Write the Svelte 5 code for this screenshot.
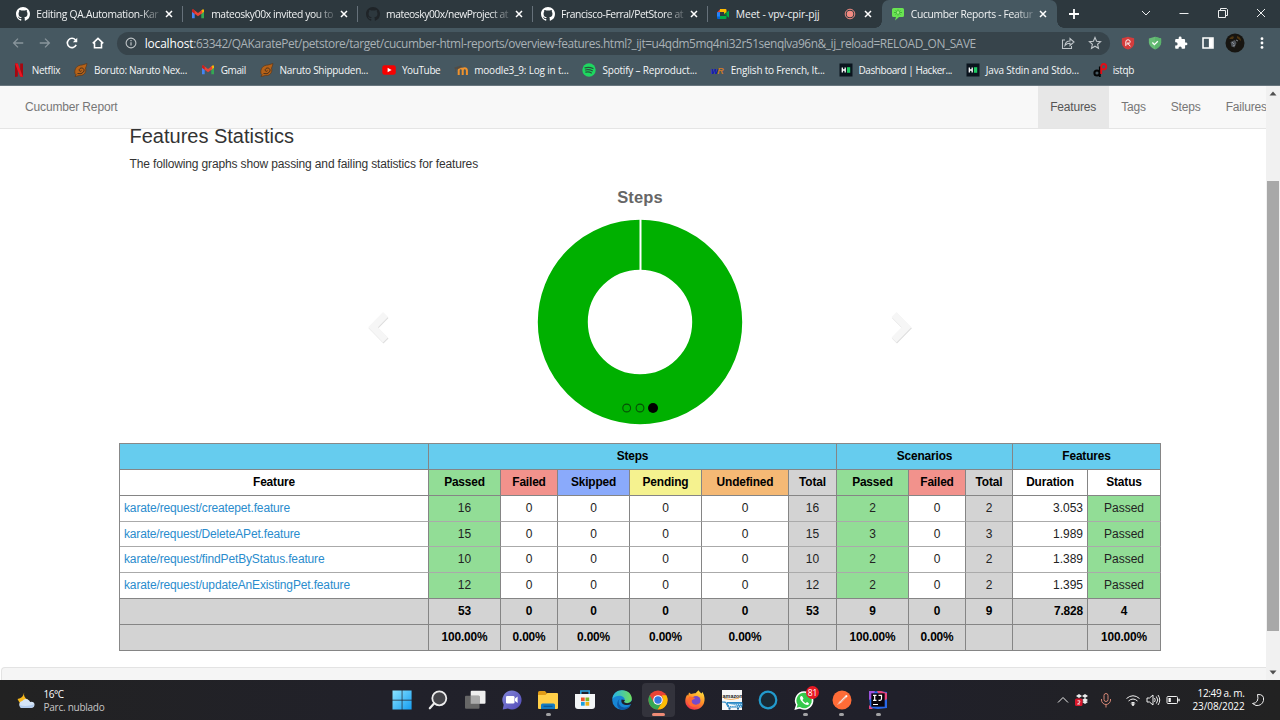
<script>
  // Spreads the letters of a label so that it fills the given width.
  function fit(node, width) {
    const count = [...node.textContent].length;
    const natural = node.getBoundingClientRect().width;
    node.style.letterSpacing = (width - natural) / count + 'px';
  }

  const tabs = [
    { icon: 'github', title: 'Editing QA.Automation-Kar', w: 122 },
    { icon: 'gmail', title: 'mateosky00x invited you to', w: 122 },
    { icon: 'githubDark', title: 'mateosky00x/newProject at', w: 122 },
    { icon: 'github', title: 'Francisco-Ferral/PetStore at', w: 122 },
    { icon: 'meet', title: 'Meet - vpv-cpir-pjj', w: 83.5, rec: true },
    { icon: 'cucumber', title: 'Cucumber Reports - Featur', w: 122, active: true }
  ];

  const bookmarks = [
    ['netflix', 'Netflix', 28.5],
    ['naruto', 'Boruto: Naruto Nex...', 93],
    ['gmail', 'Gmail', 25],
    ['naruto', 'Naruto Shippuden...', 88.5],
    ['youtube', 'YouTube', 38.5],
    ['moodle', 'moodle3_9: Log in t...', 94.5],
    ['spotify', 'Spotify – Reproduct...', 94.5],
    ['reverso', 'English to French, It...', 94],
    ['hacker', 'Dashboard | Hacker...', 93.5],
    ['hacker', 'Java Stdin and Stdo...', 93],
    ['istqb', 'istqb', 21.5]
  ];

  const heads = ['Feature', 'Passed', 'Failed', 'Skipped', 'Pending', 'Undefined', 'Total', 'Passed', 'Failed', 'Total', 'Duration', 'Status'];
  const headClass = ['', 'passed', 'failed', 'skipped', 'pending', 'undef', 'total', 'passed', 'failed', 'total', '', ''];
  const bodyClass = ['link', 'passed', '', '', '', '', 'total', 'passed', '', 'total', 'right', 'passed'];

  const rows = [
    ['karate/request/createpet.feature', '16', '0', '0', '0', '0', '16', '2', '0', '2', '3.053', 'Passed'],
    ['karate/request/DeleteAPet.feature', '15', '0', '0', '0', '0', '15', '3', '0', '3', '1.989', 'Passed'],
    ['karate/request/findPetByStatus.feature', '10', '0', '0', '0', '0', '10', '2', '0', '2', '1.389', 'Passed'],
    ['karate/request/updateAnExistingPet.feature', '12', '0', '0', '0', '0', '12', '2', '0', '2', '1.395', 'Passed']
  ];
  const linkWidths = [166, 176, 200.5, 226];

  const totals = [
    ['', '53', '0', '0', '0', '0', '53', '9', '0', '9', '7.828', '4'],
    ['', '100.00%', '0.00%', '0.00%', '0.00%', '0.00%', '', '100.00%', '0.00%', '', '', '100.00%']
  ];

  const apps = [
    { name: 'windows' }, { name: 'search' }, { name: 'taskview' }, { name: 'chat' },
    { name: 'folder', open: true }, { name: 'store' }, { name: 'edge' },
    { name: 'chrome', current: true }, { name: 'firefox' }, { name: 'amazon' },
    { name: 'alexa' }, { name: 'whatsapp', open: true, badge: '81' },
    { name: 'postman', open: true }, { name: 'intellij', open: true }
  ];
</script>

{#snippet octocat(color)}
  <svg viewBox="0 0 16 16" fill={color}><path d="M8 0C3.58 0 0 3.58 0 8c0 3.54 2.29 6.53 5.47 7.59.4.07.55-.17.55-.38 0-.19-.01-.82-.01-1.49-2.01.37-2.53-.49-2.69-.94-.09-.23-.48-.94-.82-1.13-.28-.15-.68-.52-.01-.53.63-.01 1.08.58 1.23.82.72 1.21 1.87.87 2.33.66.07-.52.28-.87.51-1.07-1.78-.2-3.64-.89-3.64-3.95 0-.87.31-1.59.82-2.15-.08-.2-.36-1.02.08-2.12 0 0 .67-.21 2.2.82.64-.18 1.32-.27 2-.27s1.36.09 2 .27c1.53-1.04 2.2-.82 2.2-.82.44 1.1.16 1.92.08 2.12.51.56.82 1.27.82 2.15 0 3.07-1.87 3.75-3.65 3.95.29.25.54.73.54 1.48 0 1.07-.01 1.93-.01 2.2 0 .21.15.46.55.38A8.01 8.01 0 0 0 16 8c0-4.42-3.58-8-8-8z" /></svg>
{/snippet}

{#snippet icon(name)}
  {#if name === 'github'}
    {@render octocat('#ffffff')}
  {:else if name === 'githubDark'}
    {@render octocat('#1f2428')}
  {:else if name === 'gmail'}
    <svg viewBox="0 0 14 14">
      <path d="M1 4v7.2h2.7V6z" fill="#4285f4" /><path d="M13 4v7.2h-2.7V6z" fill="#34a853" />
      <path d="M10.3 3.2 12 2.3q1 0 1 1.2v1.2l-2.7 2.2z" fill="#fbbc04" />
      <path d="M1 4.7V3.5Q1 2 2.4 2.5L7 6l4-3 .5 3L7 9.2z" fill="#ea4335" />
      <path d="M1 4.7V3.5Q1 2.3 2 2.3l1.7.9v3.6z" fill="#c5221f" />
    </svg>
  {:else if name === 'meet'}
    <svg viewBox="0 0 14 14">
      <path d="M1 5.5 4.3 2v3.5z" fill="#ea4335" /><path d="M1 5.2h3v5H1z" fill="#2684fc" />
      <path d="M1 9.5h3V12H2q-1 0-1-1z" fill="#0066da" /><path d="M4 9h6.5v2q0 1-1 1H4z" fill="#00ac47" />
      <path d="M4 2h5.5q1 0 1 1v3.5L8 7.2V5H4z" fill="#ffba00" />
      <path d="M4 5h4v4H4z" fill="#2d383e" />
      <path d="M10.500 5.500 13 3.400v7.400l-2.500-2z" fill="#00ac47" /><path d="m8 7 2.500-2v4z" fill="#00832d" />
    </svg>
  {:else if name === 'cucumber'}
    <svg viewBox="0 0 14 14">
      <path d="M2.500 1h9Q13 1 13 2.500v6Q13 10 11.500 10H8l-4 3.500L5 10H2.500Q1 10 1 8.500v-6Q1 1 2.500 1z" fill="#69e452" />
      <path d="m4.500 3.500 5 4m0-4-5 4M3 5.500h8M7 2.500v6" stroke="#35a52f" stroke-width=".8" />
      <circle cx="7" cy="5.500" r="1.300" fill="#9bf080" />
    </svg>
  {:else if name === 'netflix'}
    <svg viewBox="0 0 14 14"><path d="M3 .5h2.800v13L3 14zM8.200.5H11V14l-2.800-.5z" fill="#a80710" /><path d="M3 .5h2.800L11 14l-2.800-.5z" fill="#ec1420" /></svg>
  {:else if name === 'naruto'}
    <svg viewBox="0 0 14 14">
      <path d="M1 10.500C0 6 3 2 8 2l5-1.500C12.500 3 12 4 11.500 5 13 10 9 13 5.500 12.500L1 13.500l1-2z" fill="#b66218" stroke="#5a3718" stroke-width=".7" />
      <path d="M3.500 10.500q4 1.200 6-1.500c2-3-1.500-5-3.500-3.500s0 4 1.500 2.200" fill="none" stroke="#47301d" stroke-width="1" />
    </svg>
  {:else if name === 'youtube'}
    <svg viewBox="0 0 14 14"><rect x=".3" y="2.300" width="13.500" height="9.500" rx="2.200" fill="#f70000" /><path d="m5.600 4.800 4 2.200-4 2.300z" fill="#fff" /></svg>
  {:else if name === 'moodle'}
    <svg viewBox="0 0 14 14"><path d="M4.700 12V7.300q0-2 2-2t2 2V12M8.700 7.500q0-2.200 2-2.200t2.200 2V12" fill="none" stroke="#f0922c" stroke-width="2" /><path d="M.5 5 7 2.800 8 4 3.500 6zM1.500 5v4" fill="#524b43" stroke="#524b43" stroke-width=".6" /></svg>
  {:else if name === 'spotify'}
    <svg viewBox="0 0 14 14"><circle cx="7" cy="7" r="6.700" fill="#1ed760" /><path d="M3 4.800q4.300-1.200 8 .7M3.400 7q3.700-1 6.900.8M3.800 9.200q3-.8 5.600.7" fill="none" stroke="#27533b" stroke-width="1.200" stroke-linecap="round" /></svg>
  {:else if name === 'reverso'}
    <svg viewBox="0 0 14 14"><text x="0" y="11" class="rev blue">w</text><text x="6.300" y="11" class="rev orange">R</text></svg>
  {:else if name === 'hacker'}
    <svg viewBox="0 0 14 14"><rect x=".5" y=".5" width="13" height="13" fill="#0b141e" /><path d="M3.300 4.500v5M6.200 4.500v5M3.300 7h3" stroke="#fff" stroke-width="1.300" /><path d="M8 4.200h3.200v5.600H8z" fill="#1ecb62" /></svg>
  {:else if name === 'istqb'}
    <svg viewBox="0 0 14 14" fill="none"><circle cx="4" cy="10" r="2.600" stroke="#050505" stroke-width="2" /><path d="M6.800 3.500V14" stroke="#050505" stroke-width="1.800" /><path d="M8.200 11V4q0-3 2.500-3t2.500 2.700-2.700 2.600H9" stroke="#e30d16" stroke-width="1.900" /></svg>
  {/if}
{/snippet}

{#snippet appIcon(name)}
  {#if name === 'windows'}
    <svg viewBox="0 0 20 20"><defs><linearGradient id="win" x2="1" y2="1"><stop stop-color="#8be4ff" /><stop offset="1" stop-color="#149cf0" /></linearGradient></defs><path d="M.5.5h9.200v9.200H.5zM10.400.5h9.200v9.200h-9.200zM.5 10.400h9.200v9.200H.5zM10.400 10.400h9.200v9.200h-9.200z" fill="url(#win)" /></svg>
  {:else if name === 'search'}
    <svg viewBox="0 0 20 20"><circle cx="11.300" cy="8.300" r="7" fill="#45454a" stroke="#ececec" stroke-width="1.800" /><path d="m6 13.600-4.200 4.700" stroke="#ececec" stroke-width="2.200" stroke-linecap="round" /></svg>
  {:else if name === 'taskview'}
    <svg viewBox="0 0 20 20"><rect x="5.700" y=".8" width="14.800" height="13" rx="1" fill="#efefef" /><rect x="0" y="5.800" width="14.500" height="13" rx="1" fill="#666" /><path d="M5.700 5.800h8.800v8H5.700z" fill="#aaa" /></svg>
  {:else if name === 'chat'}
    <svg viewBox="0 0 20 20"><defs><linearGradient id="chat" x2="1" y2="1"><stop stop-color="#8286d8" /><stop offset="1" stop-color="#5149b8" /></linearGradient></defs><path d="M10 .5a9.500 9.500 0 1 1-4 18.100L.7 19.500l1-4.700A9.500 9.500 0 0 1 10 .5z" fill="url(#chat)" /><rect x="4" y="6" width="8.500" height="7.500" rx="1.300" fill="#fff" /><path d="m13 8.500 2.600-2v6.500L13 11z" fill="#fff" /></svg>
  {:else if name === 'folder'}
    <svg viewBox="0 0 20 20"><path d="M0 2.500q0-1.500 1.500-1.500H7l2 2.500V6H0z" fill="#e09b16" /><path d="M0 5h7.500l1.800-2H19q1 0 1 1v14q0 1-1 1H1q-1 0-1-1z" fill="#ffcf48" /><path d="M3 19v-4q0-1.500 1.500-1.500h11q1.500 0 1.500 1.500v4z" fill="#127bc2" /><path d="M5.500 16.300h9" stroke="#075491" stroke-width="1.200" /></svg>
  {:else if name === 'store'}
    <svg viewBox="0 0 20 20"><path d="M5.800 5V1h8.400v4" fill="none" stroke="#2ba4df" stroke-width="1.500" /><path d="M0 4h20v12q0 3-3 3H3q-3 0-3-3z" fill="#f3f5f6" /><path d="M6 7.500h3.700v3.700H6z" fill="#ec5428" /><path d="M10.500 7.500h3.700v3.700h-3.700z" fill="#7db729" /><path d="M6 12h3.700v3.700H6z" fill="#1ba1dd" /><path d="M10.500 12h3.700v3.700h-3.700z" fill="#efb116" /></svg>
  {:else if name === 'edge'}
    <svg viewBox="0 0 20 20"><defs><linearGradient id="edge"><stop stop-color="#25b4e9" /><stop offset="1" stop-color="#71df5b" /></linearGradient></defs><circle cx="10" cy="10" r="9.800" fill="#1786d4" /><path d="M.3 9C1 3.500 5 .2 10 .2c6 0 10 4 9.800 8.800-.2 4-5.500 5-7.300 3.500-1.300-1 .2-1.500.2-3C12.500 5.500 5 3.500.3 9z" fill="url(#edge)" /><path d="M8 8.500c-3 3.500-.5 8.500 4 9 3 .3 5-1 6.800-2.500C17.500 18 14 20 10 19.800 4.500 19 3.500 12 8 8.500z" fill="#0d5aa9" /><path d="M9.500 9.500q-1 4 3 5.200 4 .9 6.700-.9l.8 1.500 2-3-2-1.500q-2 2.800-6 2.300-2-.4-2-1.300l1-1.800z" fill="#20202a" /></svg>
  {:else if name === 'chrome'}
    <svg viewBox="0 0 20 20"><circle cx="10" cy="10" r="9.600" fill="#ea4335" /><path d="M1.700 5.200A9.600 9.600 0 0 0 9.700 19.600L14.200 12.400 10 14.800 5.800 12.300z" fill="#34a853" /><path d="M18.300 5.300A9.600 9.600 0 0 1 9.700 19.600l4.600-7.300q1.500-3-.4-7z" fill="#fbbc04" /><circle cx="10" cy="10" r="4.800" fill="#fff" /><circle cx="10" cy="10" r="3.700" fill="#3478df" /></svg>
  {:else if name === 'firefox'}
    <svg viewBox="0 0 20 20"><defs><linearGradient id="fox" x1=".8" x2=".3" y2="1"><stop stop-color="#ffe33e" /><stop offset=".5" stop-color="#ff8f27" /><stop offset="1" stop-color="#ef304d" /></linearGradient></defs><path d="M4 2.500 6 4q3-1 4.500-.7L13.500.3q1 2 3 3.200l1-1.500C20 6 20 10 19 13c-2.500 7.500-14 9.500-18 1.500-1.500-4-.3-8 1.500-10L3 6z" fill="url(#fox)" /><circle cx="11" cy="10.500" r="4.500" fill="#744bca" /><path d="M4 6.500c3 0 4 1 6 1.500-1 2-4 1.500-3.500 4 1 3.500 6 3.500 7.500 1-1 5-9 5-11 0z" fill="#ff6a31" /></svg>
  {:else if name === 'amazon'}
    <svg viewBox="0 0 20 20"><path d="M0 0h20v20H0z" fill="#f7f7f7" /><text x=".6" y="7.800" class="amz">amazon</text><path d="M2 8.500q7 2.200 15-.4" stroke="#ed9b36" stroke-width=".8" fill="none" /><path d="M0 12h3.500l2.500 5h14M5 12.500h15v4H7z" fill="#4a9bd0" stroke="#2b88c5" stroke-width="1" /><path d="M6 14.500h14M7 16.500h13" stroke="#d8effc" stroke-width=".8" stroke-dasharray="1.200 1" /><circle cx="7.500" cy="18.700" r="1.100" fill="#256b9f" /><circle cx="16" cy="18.700" r="1.100" fill="#256b9f" /></svg>
  {:else if name === 'alexa'}
    <svg viewBox="0 0 20 20"><circle cx="10" cy="10" r="8.300" fill="#182a36" stroke="#229bcd" stroke-width="2.200" /></svg>
  {:else if name === 'whatsapp'}
    <svg viewBox="0 0 20 20"><path d="M9 2a8.500 8.500 0 1 1-4.400 15.700L.5 18.800l1.300-4.100A8.500 8.500 0 0 1 9 2z" fill="#34c94b" stroke="#fff" stroke-width="1.500" /><path d="M6.200 6c-2 1-1.200 3.500 1 6s5.500 4 6.700 2.300c.6-1-1.200-2-2-2.300l-1.200 1.200c-1.500-.6-2.600-2-3.200-3.200l1-1.200C8.200 8 7.400 5.800 6.200 6z" fill="#fff" /></svg>
  {:else if name === 'postman'}
    <svg viewBox="0 0 20 20"><circle cx="10" cy="10" r="9.500" fill="#ff6c37" /><path d="m5 15 2.500-3.500L14 5q2 0 1.300 1.500L9 12.700z" fill="#fff" /><path d="m7.500 11.500 6-5.500M5.500 14.500l8.500-7" stroke="#d9562a" stroke-width=".5" /></svg>
  {:else if name === 'intellij'}
    <svg viewBox="0 0 20 20"><path d="M1 2.500 10 1l9 1v16l-9 1-8-1z" fill="#2867e8" /><path d="M9 1l4 0 6 2v6l-5 3zM1 15l4 4H1z" fill="#e7447c" /><path d="M1 1h6L4 8 1 10z" fill="#9c52dd" /><path d="M3.300 3.300h13.400v13.400H3.300z" fill="#09050d" /><path d="M5 5.300h3.500M6.700 5.300v5M5 10.300h3.500M10.500 5.300h3v3.500q0 1.500-1.500 1.500h-1.500M5 14.500h5" fill="none" stroke="#fff" stroke-width="1.200" /></svg>
  {/if}
{/snippet}

<div class="screen">
  <div class="tabstrip">
    {#each tabs as tab, i}
      <div class="tab" class:active={tab.active} class:sep={i < 4}>
        <span class="fav">{@render icon(tab.icon)}</span>
        <span class="title" class:faded={!tab.rec}><span class="txt" use:fit={tab.w}>{tab.title}</span></span>
        {#if tab.rec}
          <svg class="rec" viewBox="0 0 12 12"><circle cx="6" cy="6" r="4.800" fill="none" stroke="#f28b82" /><circle cx="6" cy="6" r="3.300" fill="#f28b82" /></svg>
        {/if}
        <svg class="x" viewBox="0 0 8 8"><path d="m1 1 6 6m0-6L1 7" stroke="#fff" stroke-width="1.500" /></svg>
      </div>
    {/each}
    <svg class="plus" viewBox="0 0 12 12"><path d="M6 1v10M1 6h10" stroke="#fff" stroke-width="1.800" /></svg>
    <div class="winbtns">
      <svg viewBox="0 0 12 12"><path d="m2 4 4 4 4-4" /></svg>
      <svg viewBox="0 0 12 12"><path d="M1.500 6.500h9" /></svg>
      <svg viewBox="0 0 12 12"><path d="M1.500 3.500h7v7h-7zM3.500 3.500v-2h6l1 1v6h-2" /></svg>
      <svg viewBox="0 0 12 12"><path d="m2 2 8 8m0-8-8 8" /></svg>
    </div>
  </div>

  <div class="toolbar">
    <div class="slot"><svg viewBox="0 0 16 16" class="dim"><path d="M14 8H3m5-5L3 8l5 5" /></svg></div>
    <div class="slot"><svg viewBox="0 0 16 16" class="dim"><path d="M2 8h11M8 3l5 5-5 5" /></svg></div>
    <div class="slot"><svg viewBox="0 0 16 16" class="lit"><path d="M12.800 10.200A5.300 5.300 0 1 1 12 4.500l1 1.500" /><path d="M14 2v5H9z" fill="#fff" stroke="none" /></svg></div>
    <div class="slot"><svg viewBox="0 0 16 16" class="lit"><path d="M2 8.500 8 2.800l6 5.700M4 7.500v6h8v-6" /></svg></div>
    <div class="omnibox">
      <svg class="info" viewBox="0 0 12 12"><circle cx="6" cy="6" r="4.900" fill="none" stroke="#bfc4c7" stroke-width="1.100" /><path d="M6 5.200v3.300M6 3v1.200" stroke="#bfc4c7" stroke-width="1.200" /></svg>
      <span class="txt host" use:fit={48.5}>localhost</span><span class="txt path" use:fit={782.500}>:63342/QAKaratePet/petstore/target/cucumber-html-reports/overview-features.html?_ijt=u4qdm5mq4ni32r51senqlva96n&_ij_reload=RELOAD_ON_SAVE</span>
      <svg class="share" viewBox="0 0 14 14"><path d="M4 4H1.500v8.500h9V10M4 9.500q.5-4.500 5-4.500V2.500L13 6 9 9.500V7.300Q6 7.200 4 9.500z" /></svg>
      <svg class="star" viewBox="0 0 14 14"><path d="m7 1.500 1.600 3.700 4 .4-3 2.700.9 4L7 10.200l-3.500 2.100.9-4-3-2.700 4-.4z" /></svg>
    </div>
    <div class="slot"><svg viewBox="0 0 16 16"><path d="M8 .8 15 2.500V9q-1 4.500-7 6.500Q2 13.500 1 9V2.500z" fill="#d43c3c" /><path d="M5.500 11.500V6.800a2.500 2.500 0 0 1 5 0v.5q-1 2-4.300 2M8.500 9.200l2.200 2.600M8 7v2" fill="none" stroke="#fff" stroke-width="1.100" /></svg></div>
    <div class="slot"><svg viewBox="0 0 16 16"><path d="M8 .8 15 2.800V8q-1 4.800-7 7.500Q2 12.800 1 8V2.800z" fill="#67bc76" /><path d="M8 .8 15 2.800V8q-1 4.800-7 7.500z" fill="#5bb46c" /><path d="m5 7.500 2.300 2.400L11.200 6" fill="none" stroke="#fff" stroke-width="1.500" /></svg></div>
    <div class="slot"><svg viewBox="0 0 24 24"><path fill="#fff" d="M20.500 11H19V7c0-1.100-.9-2-2-2h-4V3.500a2.500 2.500 0 0 0-5 0V5H4c-1.100 0-2 .9-2 2v3.800h1.500a2.700 2.700 0 0 1 0 5.400H2V20c0 1.100.9 2 2 2h3.800v-1.500a2.700 2.700 0 0 1 5.400 0V22H17c1.100 0 2-.9 2-2v-4h1.500a2.500 2.500 0 0 0 0-5z" /></svg></div>
    <div class="slot"><svg viewBox="0 0 16 16"><path d="M2.300 2.300h11.400v11.400H2.300z" fill="none" stroke="#fff" stroke-width="1.800" /><path d="M9 2.500h4.500v11H9z" fill="#fff" /></svg></div>
    <div class="slot"><svg class="avatar" viewBox="0 0 20 20"><circle cx="10" cy="10" r="9.500" fill="#171511" /><path d="M4 6q3-4 5-2l-1 2zM12 3q4 1 4 5l-4-3z" fill="#4f3612" /><path d="m5.500 9 4.500-2 1.500 3-2 4.500-3-1z" fill="#50555b" /><path d="m7 9 2 2m-1 2 2-1m1-5 2 1" stroke="#9aa0a6" stroke-width=".8" /></svg></div>
    <div class="slot"><svg viewBox="0 0 16 16" fill="#fff"><circle cx="8" cy="3" r="1.600" /><circle cx="8" cy="8" r="1.600" /><circle cx="8" cy="13" r="1.600" /></svg></div>
  </div>

  <div class="bookmarks">
    {#each bookmarks as [name, label, w]}
      <div class="bm"><span class="fav">{@render icon(name)}</span><span class="txt" use:fit={w}>{label}</span></div>
    {/each}
  </div>

  <div class="viewport">
    <div class="page">
      <nav>
        <span class="txt brand" use:fit={92.5}>Cucumber Report</span>
        <div class="links">
          <span class="current"><span class="txt" use:fit={46}>Features</span></span>
          <span><span class="txt" use:fit={24.5}>Tags</span></span>
          <span><span class="txt" use:fit={30}>Steps</span></span>
          <span><span class="txt" use:fit={41}>Failures</span></span>
        </div>
      </nav>
      <main>
        <h2><span class="txt" use:fit={164.5}>Features Statistics</span></h2>
        <p><span class="txt" use:fit={348.5}>The following graphs show passing and failing statistics for features</span></p>
        <div class="carousel">
          <svg class="arrow" viewBox="0 0 24 34"><path d="M19 4.500 6.500 17.200 19 30" class="shade" /><path d="M18.500 3.500 6 16.200l12.500 12.800" class="face" /></svg>
          <div class="chart">
            <h3><span class="txt" use:fit={45.5}>Steps</span></h3>
            <svg class="donut" viewBox="0 0 206 206">
              <circle cx="103" cy="103" r="77.200" fill="none" stroke="#00b000" stroke-width="50" />
              <path d="M103.500 0v51" stroke="#fff" stroke-width="2" />
              <g fill="none" stroke="#064f06" stroke-width="1.100"><circle cx="89.700" cy="189" r="3.900" /><circle cx="103" cy="189" r="3.900" /></g>
              <circle cx="116" cy="189" r="5" fill="#000" />
            </svg>
          </div>
          <svg class="arrow" viewBox="0 0 24 34"><path d="M5.500 4.500 18 17.200 5.500 30" class="shade" /><path d="M5 3.500 17.500 16.200 5 29" class="face" /></svg>
        </div>
        <div class="table">
          <div class="cell group"></div>
          <div class="cell group span6">Steps</div>
          <div class="cell group span3">Scenarios</div>
          <div class="cell group span2">Features</div>
          {#each heads as h, i}
            <div class="cell head {headClass[i]}">{h}</div>
          {/each}
          {#each rows as row, r}
            {#each row as c, i}
              <div class="cell {bodyClass[i]}" class:soft={r < 3}>
                {#if i === 0}<span class="txt" use:fit={linkWidths[r]}>{c}</span>{:else}{c}{/if}
              </div>
            {/each}
          {/each}
          {#each totals as row}
            {#each row as c, i}
              <div class="cell head total" class:right={i === 10}>{c}</div>
            {/each}
          {/each}
        </div>
      </main>
      <footer></footer>
    </div>
    <div class="scrollbar">
      <svg viewBox="0 0 14 14"><path d="m3.500 9.500 3.500-4 3.500 4z" fill="#505050" /></svg>
      <div class="thumb"></div>
      <svg viewBox="0 0 14 14"><path d="m3.500 4.500 3.500 4 3.500-4z" fill="#505050" /></svg>
    </div>
  </div>

  <div class="taskbar">
    <div class="weather">
      <svg viewBox="0 0 20 18"><path d="M7.500.5Q6.500 6 11.500 8l-2 4-7-1L.5 7.500Q6.500 6.500 7.500.5z" fill="#f7b81c" /><path d="M5.500 17a3.800 3.800 0 0 1 0-7.500q3-3.500 7-.8 1 .8 1.300 1.800 4.700-.5 4.700 3-.3 3.500-4.200 3.500z" fill="#d5e4f7" /><path d="M3 14q7 2 15-1-.5 4-4 4H6q-3 0-3-3z" fill="#b3ccee" /></svg>
      <div><span class="txt" use:fit={20}>16°C</span><span class="txt grey" use:fit={61}>Parc. nublado</span></div>
    </div>
    <div class="apps">
      {#each apps as app}
        <div class="app" class:current={app.current} class:open={app.open}>
          {@render appIcon(app.name)}
          {#if app.badge}<span class="badge">{app.badge}</span>{/if}
        </div>
      {/each}
    </div>
    <div class="tray">
      <svg class="chev" viewBox="0 0 12 12"><path d="m1 8.500 5-5 5 5" /></svg>
      <svg class="drop" viewBox="0 0 14 14"><path d="m4 1 3 2-3 2-3-2zM10 1l3 2-3 2-3-2zM10 5l3 2-3 2-3-2zM7 9l3-1.500L13 9l-3 2z" fill="#eee" stroke="none" /><rect x="0" y="5.500" width="7.500" height="7.500" rx="1.500" fill="#d9152a" stroke="none" /><path d="M2.500 7.800h2.300v1.500L2.500 11h2.500" stroke-width=".9" /></svg>
      <svg class="mic" viewBox="0 0 14 16"><rect x="5" y="1.500" width="4" height="8" rx="2" /><path d="M2.500 7v1a4.500 4.500 0 0 0 9 0V7M7 12.500v3" /></svg>
      <svg class="wifi" viewBox="0 0 14 14"><path d="M.5 5.500q6.500-5.500 13 0M2.500 8q4.500-4 9 0M4.800 10.300q2.200-2 4.400 0" /><circle cx="7" cy="11.500" r="1" fill="#eee" /></svg>
      <svg class="vol" viewBox="0 0 14 14"><path d="M1 5h2.500L7 2v10L3.500 9H1zM8.500 5q1.500 2 0 4M10.300 3.500q3 3.500 0 7M12 2q3.500 5 0 10" /></svg>
      <svg class="bat" viewBox="0 0 14 10"><rect x="1" y="1.500" width="10.500" height="7" rx="1" /><path d="M2.500 3h2.300v4H2.500z" fill="#fff" stroke="none" /><path d="M13 3.800v2.400" stroke-width="1.400" /></svg>
      <div class="clock"><span class="txt" use:fit={47}>12:49 a. m.</span><span class="txt" use:fit={52}>23/08/2022</span></div>
      <svg class="moon" viewBox="0 0 14 14"><path d="M6.500 1.500q7-.5 6 6-1.500 5.500-7.500 5L1.500 10.500q7-.5 5-9z" /></svg>
    </div>
  </div>
</div>

<style>
  :global(body) { margin: 0; overflow: hidden; }
  .screen { width: 1280px; height: 720px; display: flex; flex-direction: column; overflow: hidden; background: #fff; font-family: "Open Sans", "Noto Sans", sans-serif; }
  .txt { display: inline-block; flex: none; white-space: nowrap; }
  svg { display: block; flex: none; overflow: visible; }

  .tabstrip { height: 28px; flex: none; background: #2d383e; display: flex; align-items: center; padding-left: 8px; }
  .tab { width: 174.900px; height: 28px; flex: none; box-sizing: border-box; display: flex; align-items: center; padding: 0 10px 0 8.300px; position: relative; color: #f0f2f3; font-size: 10.300px; }
  .tab.sep::after { content: ""; position: absolute; right: 0; top: 6px; width: 1px; height: 16px; background: #66717a; }
  .tab.active { background: #465861; border-radius: 7px 7px 0 0; }
  .tab.active::before, .tab.active::after { content: ""; position: absolute; bottom: 0; width: 7px; height: 7px; }
  .tab.active::before { left: -7px; background: radial-gradient(circle at 0 0, transparent 6.500px, #465861 7px); }
  .tab.active::after { right: -7px; background: radial-gradient(circle at 100% 0, transparent 6.500px, #465861 7px); }
  .fav { width: 14px; height: 14px; flex: none; margin-right: 6px; }
  .fav svg { width: 14px; height: 14px; }
  .title { width: 123px; overflow: hidden; flex: none; }
  .title.faded { mask-image: linear-gradient(90deg, #000 84%, rgba(0, 0, 0, .2)); }
  .rec { width: 12px; height: 12px; margin-left: -15px; margin-right: 3px; }
  .x { width: 8px; height: 8px; margin-left: auto; }
  .plus { width: 12px; height: 12px; margin-left: 10.500px; }
  .winbtns { margin-left: auto; display: flex; gap: 26.300px; padding-right: 13px; margin-top: -2px; }
  .winbtns svg { width: 12px; height: 12px; fill: none; stroke: #eceeef; stroke-width: 1; }

  .toolbar { height: 30px; flex: none; display: flex; align-items: center; background: #465861; padding-left: 5px; }
  .slot { width: 26.700px; flex: none; display: flex; justify-content: center; }
  .slot svg { width: 14px; height: 14px; }
  .slot .avatar { width: 20px; height: 20px; }
  .dim, .lit { fill: none; stroke: #89959c; stroke-width: 1.500; }
  .lit { stroke: #fff; stroke-width: 1.800; }
  .omnibox { width: 993px; height: 23px; box-sizing: border-box; border-radius: 12px; background: #37444b; margin: 0 5px; display: flex; align-items: center; padding: 0 8px; flex: none; font-size: 11.900px; color: #a9b1b6; }
  .info { width: 12px; height: 12px; margin-right: 8px; }
  .host { color: #fff; }
  .share, .star { width: 14px; height: 14px; fill: none; stroke: #c0c6ca; stroke-width: 1.100; }
  .share { margin-left: auto; margin-right: 13px; }

  .bookmarks { height: 28px; flex: none; background: #465861; border-bottom: 1px solid #68767e; box-sizing: border-box; display: flex; gap: 13.800px; padding: 0 0 3px 11.700px; align-items: center; color: #f4f6f7; font-size: 10px; }
  .bm { display: flex; align-items: center; flex: none; }
  .rev { font: italic bold 9px "Liberation Sans", sans-serif; }
  .blue { fill: #1014c4; }
  .orange { fill: #c6762a; }

  .viewport { height: 594px; flex: none; display: flex; font-family: "Liberation Sans", Arial, sans-serif; font-size: 12px; color: #333; }
  .page { width: 1266px; flex: none; overflow: hidden; display: flex; flex-direction: column; }
  nav { height: 43px; flex: none; box-sizing: border-box; background: #f8f8f8; border-bottom: 1px solid #e5e5e5; display: flex; align-items: center; justify-content: space-between; padding-left: 25px; color: #777; }
  nav .txt { margin-bottom: 1px; }
  .links { display: flex; height: 42px; margin-right: -13.200px; }
  .links > span { padding: 0 12.500px; display: flex; align-items: center; }
  .links .current { background: #e7e7e7; color: #555; }
  main { width: 1042px; margin-left: 119px; flex: none; height: 538px; }
  h2 { font-size: 20px; font-weight: 400; line-height: 22px; margin: -4px 0 0 10.500px; }
  p { margin: 8px 0 0 10.500px; line-height: 18px; }
  .carousel { display: flex; justify-content: space-between; align-items: center; margin: 13px 248px 0 248px; height: 256px; }
  .chart { display: flex; flex-direction: column; align-items: center; height: 256px; }
  h3 { margin: 0; font-size: 16.500px; line-height: 22px; color: #666; height: 33px; }
  .donut { width: 206px; height: 206px; }
  .arrow { width: 24px; height: 34px; fill: none; stroke-width: 7; margin-top: 28px; }
  .shade { stroke: #dedede; }
  .face { stroke: #f6f6f6; }

  .table { display: grid; grid-template-columns: 309px 72px 57px 72px 72px 87px 48px 72px 57px 47px 75px 73px; grid-template-rows: 26px 26px 26px 25px 26px 26px 26px 26px; border: solid #888; border-width: 1px 0 0 1px; margin-top: 1px; width: 1041px; color: #222; }
  .cell { border: solid #858585; border-width: 0 1px 1px 0; display: flex; align-items: center; justify-content: center; padding-bottom: 1px; }
  .cell.soft { border-bottom-color: #aaa; }
  .group, .head { font-weight: 700; color: #000; font-size: 11.900px; letter-spacing: -.15px; padding-bottom: 2px; }
  .group { background: #66ccee; }
  .span6 { grid-column: span 6; }
  .span3 { grid-column: span 3; }
  .span2 { grid-column: span 2; }
  .passed { background: #92dd96; }
  .failed { background: #f2928c; }
  .skipped { background: #8aaafb; }
  .pending { background: #f5f28f; }
  .undef { background: #f5b975; }
  .total { background: #d3d3d3; }
  .link { justify-content: flex-start; padding-left: 4px; color: #2a8ccd; }
  .right { justify-content: flex-end; padding-right: 4px; }
  footer { margin: 0 0 0 1px; flex: 1; background: #f5f5f5; border: solid #e3e3e3; border-width: 1px 0 0 1px; border-radius: 4px 0 0 0; }

  .scrollbar { width: 14px; background: #f1f1f1; flex: none; display: flex; flex-direction: column; align-items: center; }
  .scrollbar svg { width: 14px; height: 14px; }
  .thumb { width: 12px; height: 450px; margin-top: 81px; margin-bottom: 35px; background: #a8a8a8; }

  .taskbar { height: 40px; flex: none; background: linear-gradient(90deg, #222, #21212a 30%, #20202a 70%, #222); display: flex; justify-content: space-between; color: #fff; position: relative; }
  .weather { width: 383.200px; flex: none; box-sizing: border-box; padding-left: 17px; display: flex; align-items: center; font-size: 10px; line-height: 13px; }
  .weather svg { width: 19px; height: 17px; margin-right: 7.500px; }
  .weather div { display: flex; flex-direction: column; align-items: flex-start; padding-top: 1px; }
  .grey { color: #c6c6c6; }
  .apps { display: flex; flex: none; }
  .app { width: 36.700px; height: 40px; display: flex; align-items: center; justify-content: center; position: relative; flex: none; }
  .app svg { width: 20px; height: 20px; position: relative; }
  .app.current::before { content: ""; position: absolute; inset: 3px 2px; background: #33333c; border-radius: 4px; }
  .app.open::after, .app.current::after { content: ""; position: absolute; bottom: 4.500px; width: 5px; height: 2.500px; border-radius: 2px; background: #a2a2a4; }
  .app.current::after { width: 13px; background: #ef8b76; }
  .badge { position: absolute; left: 19px; top: 5.500px; width: 13.500px; height: 13.500px; border-radius: 50%; background: #e81a24; font-size: 8.500px; line-height: 13px; text-align: center; }
  .amz { font: bold 5.400px "Liberation Sans", sans-serif; fill: #222; }
  .tray { flex: 1; display: flex; align-items: center; justify-content: flex-end; padding-right: 15px; }
  .tray svg { fill: none; stroke: #eee; stroke-width: 1; width: 14px; height: 14px; }
  .tray .chev { width: 12px; height: 12px; margin-right: 6px; }
  .tray .drop { margin-right: 17px; }
  .tray .mic { stroke: #d58776; height: 16px; margin-right: 13px; margin-left: -7px; }
  .tray .wifi { margin-right: 6px; }
  .tray .vol { margin-right: 6px; }
  .tray .bat { height: 10px; }
  .clock { width: 64.500px; display: flex; flex-direction: column; align-items: flex-end; font-size: 10px; line-height: 13.500px; margin-right: 6.500px; }
</style>
